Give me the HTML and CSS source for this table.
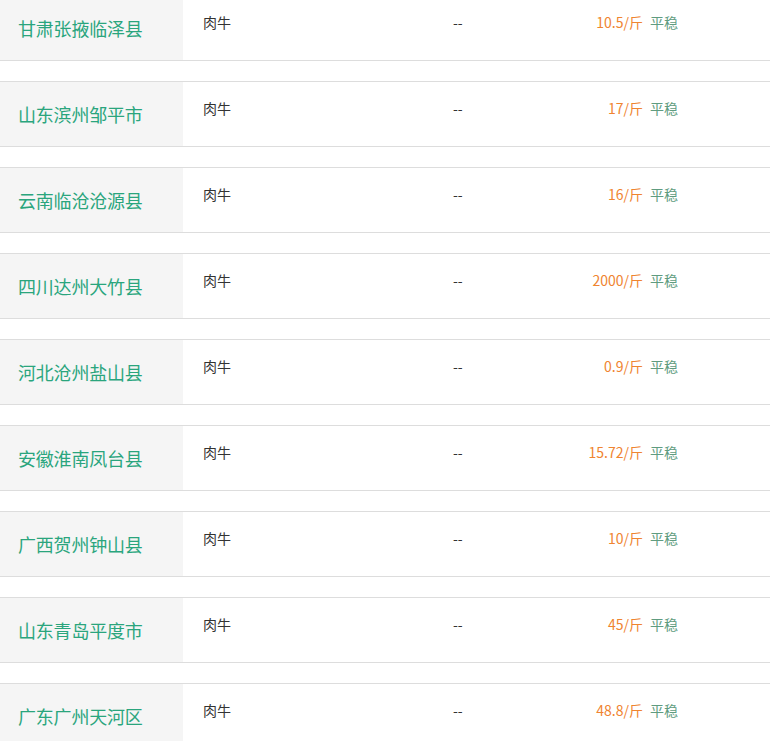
FILE: index.html
```html
<!DOCTYPE html>
<html lang="zh-CN">
<head>
<meta charset="utf-8">
<title>肉牛价格</title>
<link rel="stylesheet" href="styles.css">
</head>
<body>
<div class="list">
  <div class="row"><div class="name">甘肃张掖临泽县</div><div class="kind">肉牛</div><div class="dash">--</div><div class="price">10.5/斤</div><div class="trend">平稳</div></div>
  <div class="row"><div class="name">山东滨州邹平市</div><div class="kind">肉牛</div><div class="dash">--</div><div class="price">17/斤</div><div class="trend">平稳</div></div>
  <div class="row"><div class="name">云南临沧沧源县</div><div class="kind">肉牛</div><div class="dash">--</div><div class="price">16/斤</div><div class="trend">平稳</div></div>
  <div class="row"><div class="name">四川达州大竹县</div><div class="kind">肉牛</div><div class="dash">--</div><div class="price">2000/斤</div><div class="trend">平稳</div></div>
  <div class="row"><div class="name">河北沧州盐山县</div><div class="kind">肉牛</div><div class="dash">--</div><div class="price">0.9/斤</div><div class="trend">平稳</div></div>
  <div class="row"><div class="name">安徽淮南凤台县</div><div class="kind">肉牛</div><div class="dash">--</div><div class="price">15.72/斤</div><div class="trend">平稳</div></div>
  <div class="row"><div class="name">广西贺州钟山县</div><div class="kind">肉牛</div><div class="dash">--</div><div class="price">10/斤</div><div class="trend">平稳</div></div>
  <div class="row"><div class="name">山东青岛平度市</div><div class="kind">肉牛</div><div class="dash">--</div><div class="price">45/斤</div><div class="trend">平稳</div></div>
  <div class="row"><div class="name">广东广州天河区</div><div class="kind">肉牛</div><div class="dash">--</div><div class="price">48.8/斤</div><div class="trend">平稳</div></div>
</div>
</body>
</html>
```

FILE: styles.css
```css
html, body {
  margin: 0;
  padding: 0;
  background: #fff;
}
body {
  font-family: "Noto Sans CJK SC", "Noto Sans", sans-serif;
  font-size: 14px;
  color: #333;
}
.list {
  margin-top: -5px;
}
.row {
  display: flex;
  height: 64px;
  border-top: 1px solid #ddd;
  border-bottom: 1px solid #ddd;
  margin-bottom: 20px;
}
.name {
  flex: 0 0 183px;
  box-sizing: border-box;
  padding-left: 18px;
  background: #f5f5f5;
  color: #2aa57d;
  font-size: 18px;
  display: flex;
  align-items: center;
  letter-spacing: -0.2px;
}
.kind, .dash, .price, .trend {
  padding-top: 16px;
  line-height: 20px;
}
.kind {
  flex: 0 0 250px;
  padding-left: 20px;
  color: #333;
}
.dash {
  flex: 0 0 100px;
  color: #333;
}
.price {
  flex: 0 0 90px;
  text-align: right;
  color: #ef8430;
}
.trend {
  margin-left: 7px;
  color: #5f9c80;
}
```
